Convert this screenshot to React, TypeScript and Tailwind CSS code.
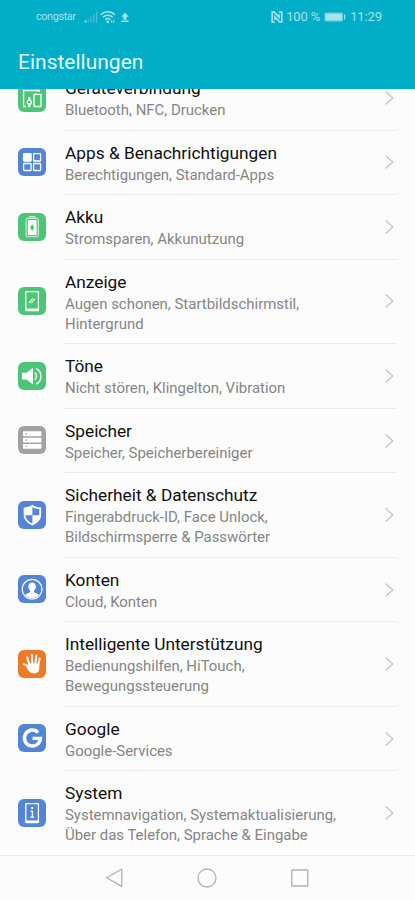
import type { ReactNode } from "react";

type Item = {
  title: string;
  lines: string[];
  color: string;
  icon: ReactNode;
};

const items: Item[] = [
  {
    title: "Geräteverbindung",
    lines: ["Bluetooth, NFC, Drucken"],
    color: "bg-[#4cc676]",
    icon: (
      <g fill="none" stroke="#fff" strokeWidth="1.3">
        <path d="M8 22.5H5.6V6.5H21V8" />
        <rect x="16" y="10.3" width="7" height="12.2" rx=".6" />
        <circle cx="11.3" cy="18.2" r="2" />
        <path d="M10.6 16l.3-2.3h.8l.3 2.3M10.6 20.4l.3 2.1h.8l.3-2.1" />
      </g>
    ),
  },
  {
    title: "Apps & Benachrichtigungen",
    lines: ["Berechtigungen, Standard-Apps"],
    color: "bg-[#5484d6]",
    icon: (
      <g fill="none" stroke="#fff" strokeWidth="1.3">
        <rect x="5.6" y="5.7" width="7.5" height="7.3" rx=".5" fill="#fff" />
        <rect x="15.6" y="5.7" width="7" height="7.3" rx=".5" />
        <rect x="5.6" y="15.5" width="7.5" height="7" rx=".5" />
        <rect x="15.6" y="15.5" width="7" height="7" rx=".5" />
      </g>
    ),
  },
  {
    title: "Akku",
    lines: ["Stromsparen, Akkunutzung"],
    color: "bg-[#4cc676]",
    icon: (
      <g>
        <path d="M11.3 4.7v-.9h5.8v.9" fill="none" stroke="#fff" strokeWidth="1" />
        <rect x="8.1" y="5.4" width="12.2" height="18.3" rx="1" fill="none" stroke="#fff" strokeWidth=".8" />
        <rect x="9.8" y="7.1" width="8.8" height="14.9" fill="#fff" />
        <path d="M14.2 11l-2 3.6 2 3.6 2-3.6z" fill="#4cc676" />
      </g>
    ),
  },
  {
    title: "Anzeige",
    lines: ["Augen schonen, Startbildschirmstil,", "Hintergrund"],
    color: "bg-[#4cc676]",
    icon: (
      <g fill="none" stroke="#fff">
        <rect x="7.8" y="4.7" width="12.6" height="19" rx=".6" strokeWidth="1.3" />
        <path d="M8 22.7h12.2" strokeWidth="2.2" />
        <path d="M11 15.8l3.8-4.4M13.2 16.2l3.8-4.4" strokeWidth="1.1" />
      </g>
    ),
  },
  {
    title: "Töne",
    lines: ["Nicht stören, Klingelton, Vibration"],
    color: "bg-[#4cc676]",
    icon: (
      <g>
        <path d="M4 10.8h4.6l6.4-5v16.8l-6.4-5H4z" fill="#fff" />
        <path d="M16.8 10.6a5 5 0 0 1 0 7.2" fill="none" stroke="#fff" strokeWidth="1.4" />
        <path d="M18 6.3c3 1.3 4.9 4.2 4.9 7.9s-1.9 6.6-4.9 7.9" fill="none" stroke="#fff" strokeWidth="1.4" />
      </g>
    ),
  },
  {
    title: "Speicher",
    lines: ["Speicher, Speicherbereiniger"],
    color: "bg-[#a2a2a2]",
    icon: (
      <g>
        <rect x="5" y="5.3" width="18.5" height="4.9" rx=".7" fill="#fff" />
        <rect x="5" y="11.7" width="18.5" height="4.7" rx=".7" fill="#fff" />
        <rect x="5" y="17.9" width="18.5" height="4.9" rx=".7" fill="#fff" />
        <path d="M7.6 7.8H9M7.6 14.1H9M7.6 20.4H9" stroke="#a2a2a2" strokeWidth="1.4" />
      </g>
    ),
  },
  {
    title: "Sicherheit & Datenschutz",
    lines: ["Fingerabdruck-ID, Face Unlock,", "Bildschirmsperre & Passwörter"],
    color: "bg-[#5484d6]",
    icon: (
      <g>
        <path d="M14.4 3.8c2.4 1.8 5.2 2.6 8.7 2.7v7.6c0 4.6-3.5 8.2-8.7 10.4-5.2-2.2-8.7-5.8-8.7-10.4V6.5c3.5-.1 6.3-.9 8.7-2.7z" fill="#fff" />
        <path d="M14.4 6.2v8h6.9V8.1c-2.7-.2-5-.7-6.9-1.9zM7.5 14.2h6.9v8.3c-4.1-1.9-6.8-4.6-6.9-8.3z" fill="#5484d6" />
      </g>
    ),
  },
  {
    title: "Konten",
    lines: ["Cloud, Konten"],
    color: "bg-[#5484d6]",
    icon: (
      <g>
        <circle cx="14.1" cy="14.2" r="9.9" fill="none" stroke="#fff" strokeWidth="1.3" />
        <path
          d="M14.1 7.5c-2.4 0-3.9 1.7-3.8 4 .1 1.9.9 3.4 1.9 4.3v1.3c-.3 1-3.5 1.1-4.8 2.8 1.7 2.1 4.1 3.1 6.7 3.1s5-1 6.7-3.1c-1.3-1.7-4.5-1.8-4.8-2.8v-1.3c1-.9 1.8-2.4 1.9-4.3.1-2.3-1.4-4-3.8-4z"
          fill="#fff"
        />
      </g>
    ),
  },
  {
    title: "Intelligente Unterstützung",
    lines: ["Bedienungshilfen, HiTouch,", "Bewegungssteuerung"],
    color: "bg-[#ed7a26]",
    icon: (
      <g fill="none" stroke="#fff" strokeLinecap="round" strokeLinejoin="round">
        <path d="M11.4 15L9.2 7.2M14.4 14l-.5-8.9M17.4 14l1-8.5M20.2 15.6l1.5-7" strokeWidth="2" />
        <path d="M6 14.2c1.9.3 3.2 1.3 4.6 3" strokeWidth="2.1" />
        <path d="M10.9 13.8h10.1l-.3 5.6c-.2 2.3-1.6 3.5-3.7 3.5h-1.8c-2.1 0-3.6-1-5-3.2l-1.6-2.7 2.5.2z" fill="#fff" strokeWidth=".8" />
      </g>
    ),
  },
  {
    title: "Google",
    lines: ["Google-Services"],
    color: "bg-[#5484d6]",
    icon: (
      <path d="M20.2 8.5a8 8 0 1 0 2.2 5.9h-7.8" fill="none" stroke="#fff" strokeWidth="3.4" />
    ),
  },
  {
    title: "System",
    lines: ["Systemnavigation, Systemaktualisierung,", "Über das Telefon, Sprache & Eingabe"],
    color: "bg-[#5484d6]",
    icon: (
      <g fill="none" stroke="#fff">
        <rect x="7.8" y="4.7" width="12.6" height="19" rx=".6" strokeWidth="1.3" />
        <path d="M8 22.7h12.2" strokeWidth="2.2" />
        <path d="M13.2 9h2" strokeWidth="1.8" />
        <path d="M12.5 12.2h1.9v5.6M12.2 18.2h4" strokeWidth="1.3" />
      </g>
    ),
  },
];

function StatusBar() {
  return (
    <div className="flex h-[34px] items-center justify-between pl-9 pr-[33px] text-[#a4e3ee]">
      <div className="flex items-center">
        <span className="w-[48px] text-[10.8px] tracking-[-0.35px]">congstar</span>
        <svg className="h-3.5 w-3.5" viewBox="0 0 14 14">
          <path d="M1.5 10.5v2" stroke="#a4e3ee" strokeWidth="1.8" />
          <path d="M4.2 9v3.5M7 6.5v6M9.8 4v8.5M12.5 1.5v11" stroke="#4fc4d8" strokeWidth="1.1" />
        </svg>
        <svg className="ml-0.5 h-3.5 w-4" viewBox="0 0 16 14" fill="none" stroke="currentColor" strokeWidth="1.4">
          <path d="M.8 4.7C4.8.8 11 .8 14.8 4.7M3 7.3c2.7-2.7 7-2.7 9.6 0M5.2 9.7c1.5-1.4 3.8-1.4 5.2 0" />
          <circle cx="7.8" cy="11.8" r=".7" fill="currentColor" />
          <path d="M11.7 10v3M13.8 10v3" strokeWidth=".9" />
        </svg>
        <svg className="ml-[5px] h-3 w-2" viewBox="0 0 8 12" fill="currentColor">
          <path d="M4 1.5L.4 5.8h2.1v2.9h3V5.8h2.1zM.4 9.5h7.2V11H.4z" />
        </svg>
      </div>
      <div className="flex items-center text-[13px]">
        <svg className="mr-[3px] h-3 w-3" viewBox="0 0 12 12" fill="none" stroke="currentColor">
          <path d="M4 11H1.2V1.2h2.1l4.7 5V3.2M8 1.2h2.8V11H8.7L4 6v3" strokeWidth="1.7" />
        </svg>
        <span className="w-[38px] whitespace-nowrap tracking-[-0.1px]">100 %</span>
        <svg className="h-2.5 w-[22px]" viewBox="0 0 22 10" fill="currentColor">
          <rect x=".5" y=".5" width="18.5" height="9" rx=".8" fill="#67cfdf" />
          <rect x="1.7" y="1.7" width="16" height="6.6" />
          <rect x="20" y="2.5" width="1.2" height="5" />
        </svg>
        <span className="ml-1 tracking-[-0.1px]">11:29</span>
      </div>
    </div>
  );
}

function SettingsRow({ item, last }: { item: Item; last: boolean }) {
  return (
    <li className="flex items-stretch pl-[18px] pr-[18px]">
      <div className="flex w-[47px] shrink-0 items-center pb-[1.5px]">
        <svg className={`h-7 w-7 rounded-md ${item.color}`} viewBox="0 0 28 28">
          {item.icon}
        </svg>
      </div>
      <div
        className={`flex flex-1 items-center justify-between border-b pr-[3px] ${
          last ? "border-transparent" : "border-[#ebebeb]"
        }`}
      >
        <div className="whitespace-nowrap pt-[11px] pb-[8.8px]">
          <h2 className="mb-[1.5px] text-[17.3px] leading-[22.5px] text-[#101010]">{item.title}</h2>
          {item.lines.map((line) => (
            <p key={line} className="text-[14.95px] leading-[19.8px] text-[#858585]">
              {line}
            </p>
          ))}
        </div>
        <svg className="h-4 w-[9px] shrink-0" viewBox="0 0 9 16" fill="none" stroke="#c4c4c4" strokeWidth="1.3">
          <path d="M.7 1.4L7.8 8 .7 14.6" />
        </svg>
      </div>
    </li>
  );
}

function NavBar() {
  return (
    <nav className="flex h-[45px] shrink-0 justify-center gap-[74px] border-t border-[#ebebeb] bg-[#fcfcfc] pt-[11.5px] pr-px">
      <svg className="h-5 w-[18px]" viewBox="0 0 18 20" fill="none" stroke="#b0b0b0" strokeWidth="1.3">
        <path d="M16.8 1.2v17.2L1.5 9.8z" strokeLinejoin="round" />
      </svg>
      <svg className="h-5 w-5" viewBox="0 0 20 20" fill="none" stroke="#b0b0b0" strokeWidth="1.3">
        <circle cx="10" cy="10" r="9" />
      </svg>
      <svg className="h-5 w-[18px]" viewBox="0 0 18 20" fill="none" stroke="#b0b0b0" strokeWidth="1.3">
        <rect x=".8" y="2" width="16" height="16" rx=".6" />
      </svg>
    </nav>
  );
}

export default function App() {
  return (
    <div className="flex h-[900px] w-[415px] flex-col overflow-hidden bg-[#fcfcfc] font-['Roboto',sans-serif]">
      <header className="h-[89px] shrink-0 bg-[#00adc6]">
        <StatusBar />
        <h1 className="pl-[18px] pt-3.5 text-[21px] leading-7 text-[#e3f8fb]">Einstellungen</h1>
      </header>
      <main className="min-h-0 flex-1 overflow-hidden">
        <ul className="-mt-[23px]">
          {items.map((item, i) => (
            <SettingsRow key={item.title} item={item} last={i === items.length - 1} />
          ))}
        </ul>
      </main>
      <NavBar />
    </div>
  );
}
